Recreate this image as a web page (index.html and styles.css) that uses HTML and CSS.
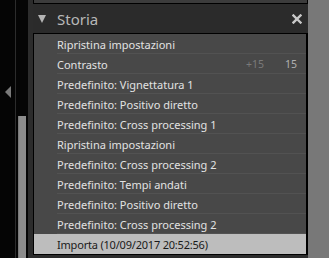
FILE: index.html
```html
<!DOCTYPE html>
<html>
<head>
<meta charset="utf-8">
<link rel="stylesheet" href="styles.css">
</head>
<body>
<div class="rail">
  <div class="arrow"></div>
</div>
<div class="scrollcol">
  <div class="thumb"></div>
</div>
<div class="panel">
  <div class="topband"></div>
  <div class="header">
    <span class="tri"></span>
    <span class="title">Storia</span>
    <svg class="close" width="10" height="10" viewBox="0 0 10 10"><path d="M1.5 1.5 L8.5 8.5 M8.5 1.5 L1.5 8.5" stroke="#c9c9c9" stroke-width="2.4" stroke-linecap="square"/></svg>
  </div>
  <div class="list">
    <div class="row"><span class="label">Ripristina impostazioni</span></div>
    <div class="row"><span class="label">Contrasto</span><span class="delta">+15</span><span class="val">15</span></div>
    <div class="row"><span class="label">Predefinito: Vignettatura 1</span></div>
    <div class="row"><span class="label">Predefinito: Positivo diretto</span></div>
    <div class="row"><span class="label">Predefinito: Cross processing 1</span></div>
    <div class="row"><span class="label">Ripristina impostazioni</span></div>
    <div class="row"><span class="label">Predefinito: Cross processing 2</span></div>
    <div class="row"><span class="label">Predefinito: Tempi andati</span></div>
    <div class="row"><span class="label">Predefinito: Positivo diretto</span></div>
    <div class="row"><span class="label">Predefinito: Cross processing 2</span></div>
    <div class="row selected"><span class="label">Importa (10/09/2017 20:52:56)</span></div>
  </div>
</div>
<div class="right"></div>
</body>
</html>
```
FILE: styles.css
```css
html, body {
  margin: 0;
  padding: 0;
}
body {
  width: 329px;
  height: 258px;
  overflow: hidden;
  display: flex;
  background: #050505;
  font-family: "Noto Sans", "Open Sans", sans-serif;
}
.rail {
  width: 15px;
  border-right: 1px solid #2c2c2c;
  background: #050505;
  padding-top: 86px;
  box-sizing: content-box;
}
.arrow {
  width: 0;
  height: 0;
  margin-left: 5px;
  border-top: 6px solid transparent;
  border-bottom: 6px solid transparent;
  border-right: 6px solid #7a7a7a;
}
.scrollcol {
  width: 12px;
  background: #050505;
  padding-left: 2px;
  box-sizing: border-box;
  padding-top: 116px;
}
.thumb {
  width: 8px;
  height: 100%;
  background: #8c8c8c;
  border-left: 1px solid #7a7a7a;
  box-sizing: border-box;
}
.panel {
  width: 280px;
  background: #2c2c2c;
  padding-left: 5px;
  box-sizing: border-box;
  display: flex;
  flex-direction: column;
}
.topband {
  height: 3px;
  background: #3c3c3c;
  border-bottom: 1px solid #000;
  border-left: 1px solid #000;
  border-right: 1px solid #000;
}
.header {
  height: 29px;
  display: flex;
  align-items: center;
  background: #2b2b2b;
  padding-left: 5px;
  padding-right: 6px;
}
.tri {
  width: 0;
  height: 0;
  border-left: 4px solid transparent;
  border-right: 4px solid transparent;
  border-top: 8px solid #b4b4b4;
  margin-top: 1px;
}
.title {
  margin-left: 11px;
  font-size: 15px;
  color: #b8b8b8;
  flex: 1;
  line-height: 18px;
}
.close {
  display: block;
  margin-top: 1px;
}
.list {
  border: 1px solid #000;
  border-right-width: 2px;
  background: #484848;
}
.row {
  height: 20px;
  display: flex;
  align-items: center;
  padding-left: 23px;
  position: relative;
  font-size: 11px;
  color: #e2e2e2;
}
.row::after {
  content: "";
  position: absolute;
  left: 23px;
  right: 0;
  bottom: 0;
  height: 1px;
  background: #525252;
}
.row.selected::after {
  display: none;
}
.label {
  flex: 1;
}
.delta {
  color: #7a7a7a;
  font-size: 10.5px;
  width: 39px;
}
.val {
  color: #b0b0b0;
  font-size: 10.5px;
  width: 21px;
}
.selected {
  background: #bdbdbd;
  color: #1a1a1a;
  letter-spacing: -0.2px;
}
.right {
  flex: 1;
  background: #787878;
}
```
